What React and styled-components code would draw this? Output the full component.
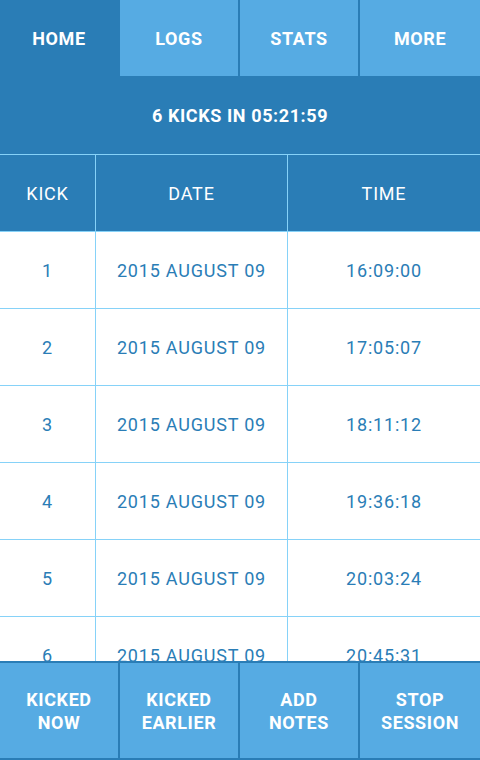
import React from 'react';
import styled, { createGlobalStyle } from 'styled-components';

const dark = '#2a7db6';
const light = '#56abe3';
const line = '#86d2f8';

const Global = createGlobalStyle`
  html, body, #root {
    margin: 0;
    height: 100%;
  }
  body {
    font-family: Roboto, "Liberation Sans", sans-serif;
    background: #fff;
  }
`;

const Screen = styled.div`
  display: flex;
  flex-direction: column;
  height: 760px;
  width: 480px;
  overflow: hidden;
`;

const TabBar = styled.div`
  display: flex;
  height: 76px;
  background: ${dark};
`;

const Tab = styled.div`
  flex: 0 0 120px;
  box-sizing: border-box;
  display: flex;
  align-items: center;
  justify-content: center;
  color: #fff;
  font-weight: 700;
  font-size: 18px;
  letter-spacing: 0.6px;
  background: ${(p) => (p.active ? dark : light)};
  border-right: 2px solid ${dark};
  &:last-child {
    border-right: none;
  }
`;

const Summary = styled.div`
  height: 78px;
  display: flex;
  align-items: center;
  justify-content: center;
  background: ${dark};
  color: #fff;
  font-weight: 700;
  font-size: 18px;
  letter-spacing: 0.6px;
  border-bottom: 1px solid ${line};
`;

const Row = styled.div`
  display: grid;
  grid-template-columns: 95px 192px 1fr;
  height: 76px;
  flex: 0 0 76px;
  border-bottom: 1px solid ${line};
  background: ${(p) => (p.head ? dark : '#fff')};
  color: ${(p) => (p.head ? '#fff' : dark)};
`;

const Cell = styled.div`
  display: flex;
  align-items: center;
  justify-content: center;
  font-size: 18px;
  letter-spacing: 0.8px;
  & + & {
    border-left: 1px solid ${line};
  }
`;

const Body = styled.div`
  flex: 1;
  overflow: hidden;
  display: flex;
  flex-direction: column;
`;

const Actions = styled.div`
  display: flex;
  height: 99px;
  box-sizing: border-box;
  background: ${dark};
  border-top: 2px solid ${dark};
  border-bottom: 2px solid ${dark};
`;

const Action = styled.div`
  flex: 0 0 120px;
  box-sizing: border-box;
  display: flex;
  flex-direction: column;
  align-items: center;
  justify-content: center;
  background: ${light};
  color: #fff;
  font-weight: 700;
  font-size: 18px;
  letter-spacing: 0.6px;
  line-height: 23px;
  text-align: center;
  border-right: 2px solid ${dark};
  &:last-child {
    border-right: none;
  }
`;

const kicks = [
  ['1', '16:09:00'],
  ['2', '17:05:07'],
  ['3', '18:11:12'],
  ['4', '19:36:18'],
  ['5', '20:03:24'],
  ['6', '20:45:31'],
];

export default function App() {
  return (
    <Screen>
      <Global />
      <TabBar>
        <Tab active>HOME</Tab>
        <Tab>LOGS</Tab>
        <Tab>STATS</Tab>
        <Tab>MORE</Tab>
      </TabBar>
      <Summary>6 KICKS IN 05:21:59</Summary>
      <Row head>
        <Cell>KICK</Cell>
        <Cell>DATE</Cell>
        <Cell>TIME</Cell>
      </Row>
      <Body>
        {kicks.map(([n, t]) => (
          <Row key={n}>
            <Cell>{n}</Cell>
            <Cell>2015 AUGUST 09</Cell>
            <Cell>{t}</Cell>
          </Row>
        ))}
      </Body>
      <Actions>
        <Action>KICKED<br />NOW</Action>
        <Action>KICKED<br />EARLIER</Action>
        <Action>ADD<br />NOTES</Action>
        <Action>STOP<br />SESSION</Action>
      </Actions>
    </Screen>
  );
}
